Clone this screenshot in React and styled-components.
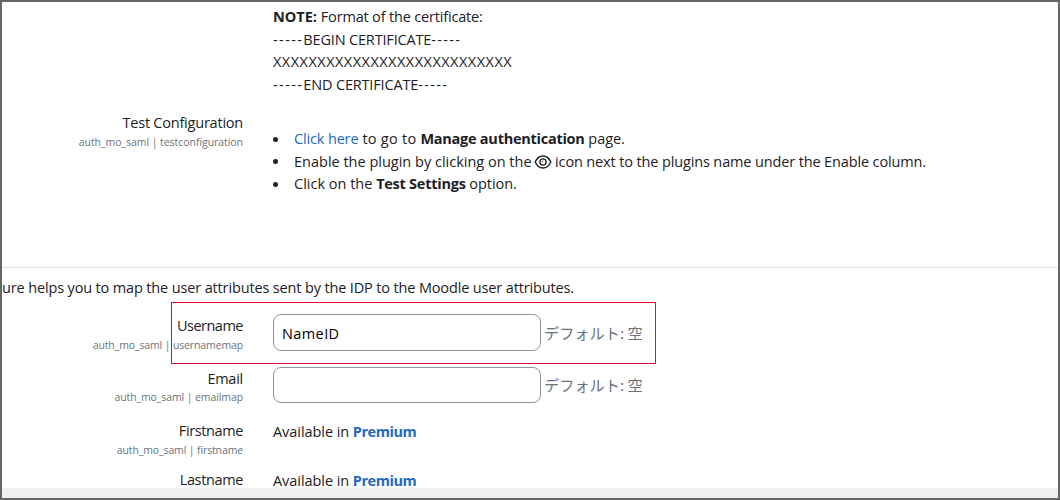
import React from "react";
import styled, { createGlobalStyle } from "styled-components";

const GlobalStyle = createGlobalStyle`
  * {
    box-sizing: border-box;
  }

  body {
    margin: 0;
    background: #fff;
  }
`;

const Page = styled.main`
  display: flex;
  flex-direction: column;
  width: 1060px;
  height: 500px;
  overflow: hidden;
  border: 2px solid #666;
  background: #fff;
  color: #1d2125;
  font-family: "Open Sans", "Noto Sans", "Noto Sans CJK JP", sans-serif;
  font-size: 14.5px;
  line-height: 22.5px;
`;

const Content = styled.div`
  height: 486px;
  flex: none;
`;

const ScrollTrack = styled.div`
  flex: 1;
  background: #f0f0f0;
`;

const Row = styled.div`
  display: grid;
  grid-template-columns: 241px 1fr;
  column-gap: 30px;
  height: ${({ $height }) => $height}px;
`;

const Label = styled.div`
  padding-top: ${({ $top }) => $top || 0}px;
  text-align: right;
  white-space: nowrap;
`;

const Name = styled.div`
  height: ${({ $height }) => $height || 22}px;
  line-height: 22px;
  letter-spacing: ${({ $track }) => $track || 0}px;
`;

const Key = styled.div`
  color: #6a737b;
  font-size: 10.5px;
  line-height: 17px;
  letter-spacing: ${({ $track }) => $track || -0.1}px;
`;

const Value = styled.div`
  padding-top: ${({ $top }) => $top || 0}px;
  white-space: nowrap;
`;

const Text = styled.span`
  letter-spacing: ${({ $track }) => $track || 0}px;
`;

const Strong = styled.strong`
  font-weight: 700;
  letter-spacing: ${({ $track }) => $track || 0}px;
`;

const Link = styled.a`
  color: #1f69c0;
  text-decoration: none;
  font-weight: ${({ $bold }) => ($bold ? 700 : 400)};
  letter-spacing: ${({ $track }) => $track || 0}px;
`;

const Steps = styled.ul`
  margin: 0;
  padding: 0;
  list-style: none;
`;

const Step = styled.li`
  display: flex;
  align-items: center;
  height: 22.5px;
  white-space: pre;

  &::before {
    content: "";
    width: 5px;
    height: 5px;
    margin-right: 16px;
    border-radius: 50%;
    background: #1d2125;
  }
`;

const EyeIcon = styled.svg`
  width: 18px;
  height: 14px;
  margin: 0 3.5px 0 2px;
`;

const Intro = styled.p`
  height: 46px;
  margin: 0;
  padding-top: 9px;
  border-top: 1px solid #dee2e6;
  white-space: nowrap;
`;

const Field = styled.div`
  display: flex;
  align-items: center;
  gap: 3px;
  height: ${({ $height }) => $height}px;
`;

const Input = styled.input`
  width: 268px;
  height: 100%;
  padding: 2px 8px 0;
  border: 1px solid #8f959e;
  border-radius: 8px;
  outline: none;
  background: #fff;
  color: #000;
  font: inherit;
  letter-spacing: 0.4px;
`;

const Default = styled.span`
  padding-bottom: 2px;
  color: #6a737b;
  font-family: "Noto Sans CJK JP", sans-serif;
  font-size: 15.2px;
  line-height: 22px;
`;

const Highlight = styled.div`
  position: absolute;
  top: 302px;
  left: 171px;
  width: 485px;
  height: 62px;
  border: 1px solid #e8063c;
  pointer-events: none;
`;

const Eye = () => (
  <EyeIcon viewBox="0 0 18 14" fill="none" stroke="#1d2125" strokeWidth="1.4">
    <path d="M1.2 7C2.9 3.1 5.7 1 9 1S15.1 3.1 16.8 7C15.1 10.9 12.3 13 9 13S2.9 10.9 1.2 7Z" />
    <circle cx="9" cy="7" r="3.1" strokeWidth="1.3" />
    <path d="M7.6 7A1.4 1.4 0 0 0 9 5.6" strokeWidth="0.8" />
  </EyeIcon>
);

const SettingLabel = ({ name, id, top, track, keyTrack, nameHeight }) => (
  <Label $top={top}>
    <Name $track={track} $height={nameHeight}>
      {name}
    </Name>
    {id && <Key $track={keyTrack}>auth_mo_saml | {id}</Key>}
  </Label>
);

const Marker = ({ children }) => (
  <>
    <Text $track={1.4}>-----</Text>
    <Text $track={-0.17}>{children}</Text>
    <Text $track={1.35}>-----</Text>
  </>
);

const Premium = () => (
  <>
    <Text $track={-0.06}>Available in </Text>
    <Link $bold $track={-0.45}>
      Premium
    </Link>
  </>
);

const App = () => {
  return (
    <>
      <GlobalStyle />
      <Page>
        <Content>
          <Row $height={110}>
            <Label />
            <Value $top={4}>
              <Strong>NOTE:</Strong>{" "}
              <Text $track={-0.17}>Format of the certificate:</Text>
              <br />
              <Marker>BEGIN CERTIFICATE</Marker>
              <br />
              <Text $track={0.48}>XXXXXXXXXXXXXXXXXXXXXXXXXXX</Text>
              <br />
              <Marker>END CERTIFICATE</Marker>
            </Value>
          </Row>
          <Row $height={155}>
            <SettingLabel
              name="Test Configuration"
              id="testconfiguration"
              track={-0.22}
              keyTrack={-0.05}
            />
            <Value $top={16}>
              <Steps>
                <Step>
                  <Link $track={-0.15}>Click here</Link>
                  <Text $track={0.26}> to go to </Text>
                  <Strong $track={-0.26}>Manage authentication</Strong>
                  <Text $track={-0.05}> page.</Text>
                </Step>
                <Step>
                  <Text>Enable the plugin by clicking on the</Text>
                  <Eye />
                  <Text $track={-0.135}>
                    icon next to the plugins name under the Enable column.
                  </Text>
                </Step>
                <Step>
                  <Text>Click on the </Text>
                  <Strong $track={-0.25}>Test Settings</Strong>
                  <Text $track={-0.05}> option.</Text>
                </Step>
              </Steps>
            </Value>
          </Row>
          <Intro>
            <Text $track={-0.145}>
              ure helps you to map the user attributes sent by the IDP to the
              Moodle user attributes.
            </Text>
          </Intro>
          <Row $height={53}>
            <SettingLabel
              name="Username"
              id="usernamemap"
              top={2}
              track={-0.5}
              keyTrack={-0.13}
            />
            <Value $top={1}>
              <Field $height={37}>
                <Input defaultValue="NameID" />
                <Default>デフォルト: 空</Default>
              </Field>
            </Value>
          </Row>
          <Row $height={53}>
            <SettingLabel
              name="Email"
              id="emailmap"
              top={2}
              track={-0.25}
              nameHeight={21}
            />
            <Value $top={1}>
              <Field $height={36}>
                <Input />
                <Default>デフォルト: 空</Default>
              </Field>
            </Value>
          </Row>
          <Row $height={49}>
            <SettingLabel
              name="Firstname"
              id="firstname"
              top={1}
              track={-0.39}
              keyTrack={-0.13}
            />
            <Value $top={2}>
              <Premium />
            </Value>
          </Row>
          <Row $height={18}>
            <SettingLabel name="Lastname" top={1} track={-0.37} />
            <Value $top={2}>
              <Premium />
            </Value>
          </Row>
        </Content>
        <ScrollTrack />
      </Page>
      <Highlight />
    </>
  );
};

export default App;
